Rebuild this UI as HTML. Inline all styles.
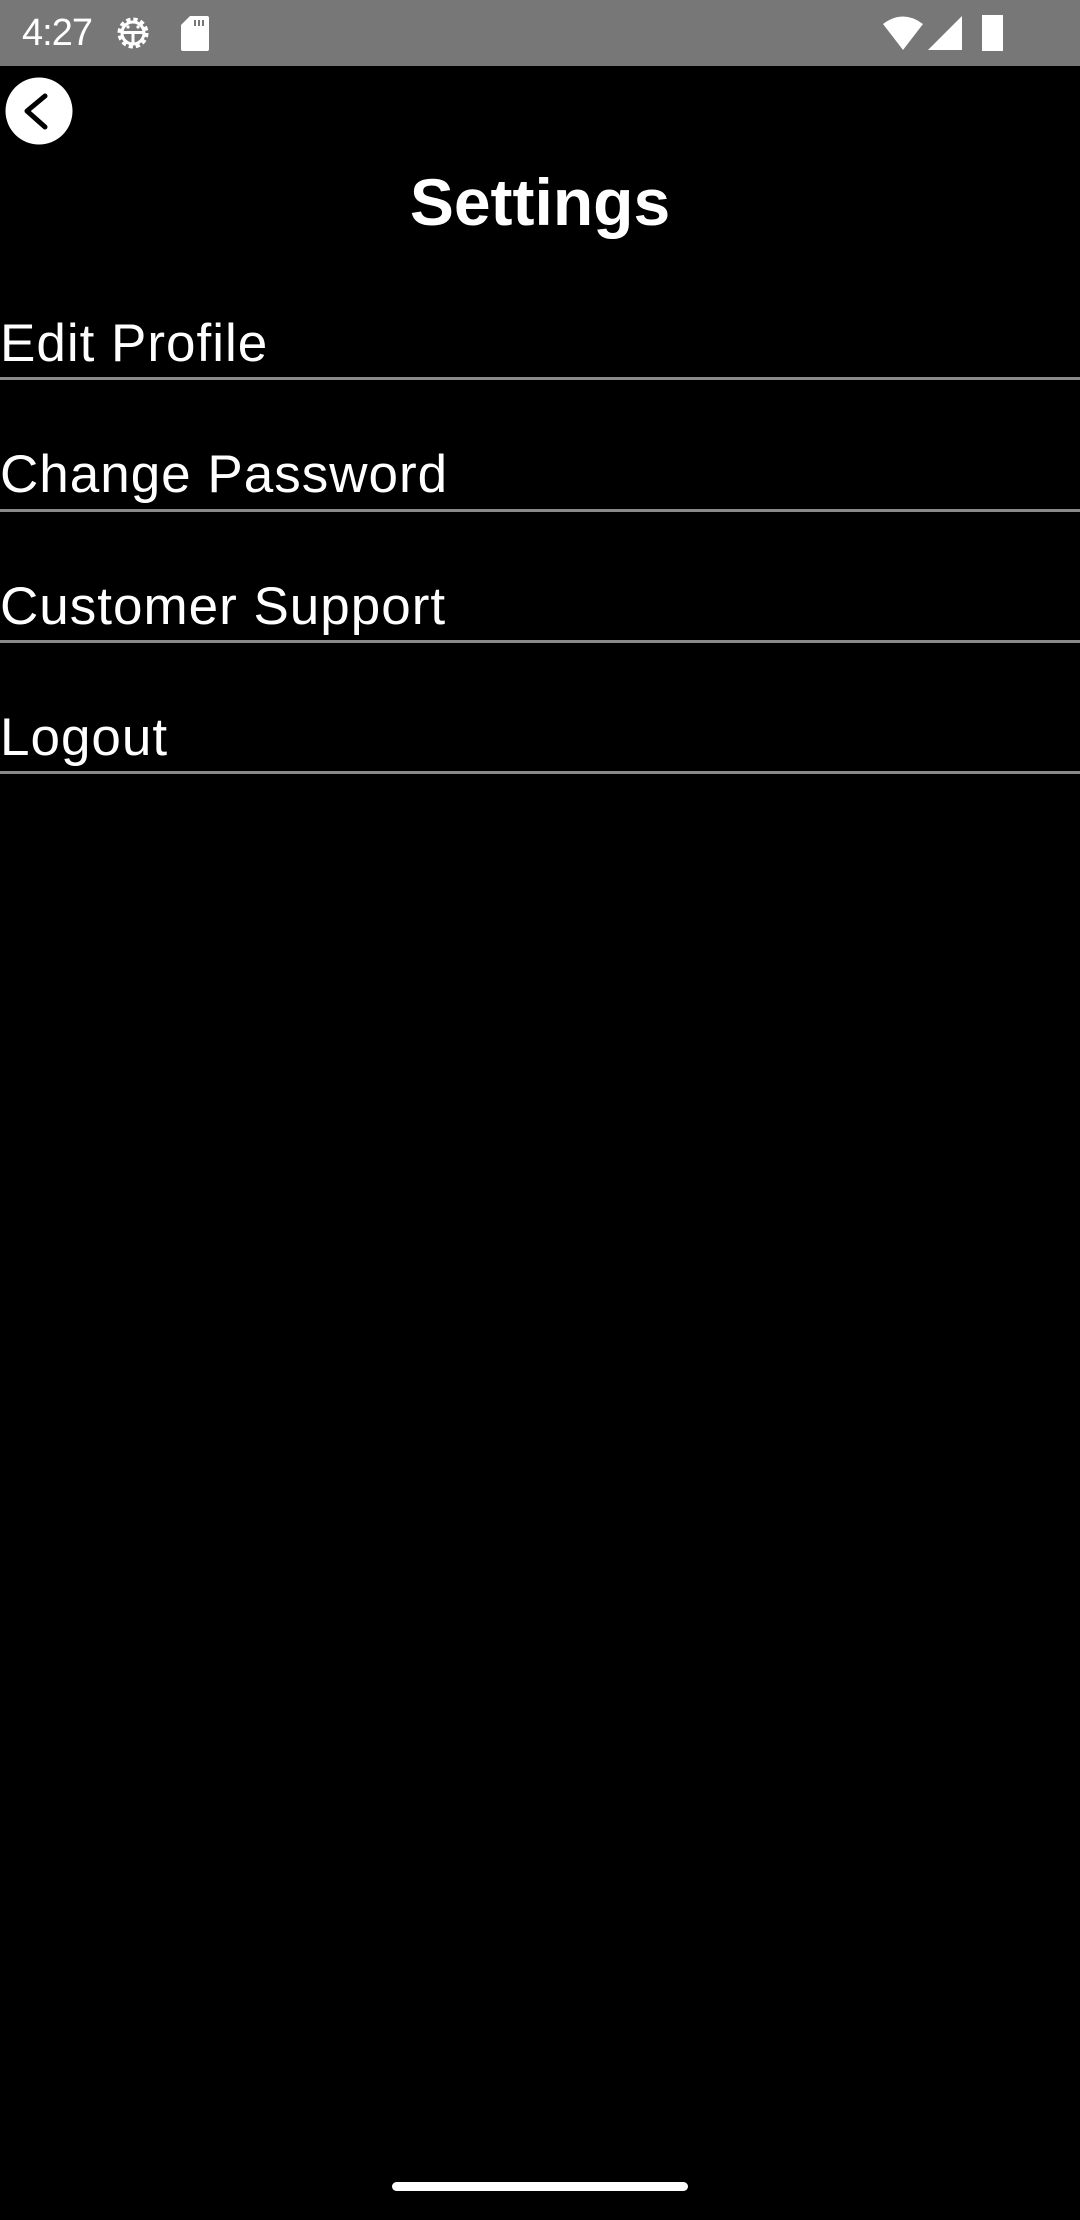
<!DOCTYPE html>
<html><head><meta charset="utf-8"><style>
html,body{margin:0;padding:0;background:#000;width:1080px;height:2220px;overflow:hidden;font-family:"Liberation Sans",sans-serif;color:#fff}
.sb{position:absolute;left:0;top:0;width:1080px;height:66px;background:#777}
.time{position:absolute;left:22px;top:13px;font-size:38px;line-height:40px;letter-spacing:-1px}
.title{position:absolute;left:0;width:1080px;text-align:center;top:162px;font-size:66px;font-weight:bold;line-height:80px}
.item{position:absolute;left:0;font-size:53px;line-height:60px;letter-spacing:1px}
.div{position:absolute;left:0;width:1080px;height:3px;background:#8a8a8a}
.home{position:absolute;left:392px;top:2182px;width:296px;height:9px;border-radius:5px;background:#fff}
</style></head><body>
<div class="sb">
<div class="time">4:27</div>
<svg style="position:absolute;left:113px;top:14px" width="40" height="38" viewBox="0 0 40 38">
<circle cx="20" cy="19" r="13" fill="none" stroke="#fff" stroke-width="5" stroke-dasharray="4 2.8"/>
<circle cx="20" cy="19" r="11" fill="none" stroke="#fff" stroke-width="3"/>
<rect x="9" y="17" width="22" height="3" fill="#fff"/><rect x="18.5" y="17" width="3" height="12" fill="#fff"/>
<circle cx="15" cy="13" r="1.6" fill="#fff"/><circle cx="25" cy="13" r="1.6" fill="#fff"/>
</svg>
<svg style="position:absolute;left:181px;top:16px" width="28" height="35" viewBox="0 0 28 35"><path d="M9 0H26a2 2 0 0 1 2 2V33a2 2 0 0 1-2 2H2a2 2 0 0 1-2-2V9Z" fill="#fff"/><rect x="13" y="4" width="2" height="6" fill="#777"/><rect x="17" y="4" width="2" height="6" fill="#777"/><rect x="21" y="4" width="2" height="6" fill="#777"/></svg>
<svg style="position:absolute;left:883px;top:15px" width="122" height="37" viewBox="0 0 122 37">
<path d="M0 9Q20 -6 40 9L20 35Z" fill="#fff"/>
<path d="M45 35L79 1V35Z" fill="#fff"/>
<rect x="99" y="0" width="21" height="36" fill="#fff"/>
</svg>
</div>
<svg style="position:absolute;left:5px;top:77px" width="68" height="68" viewBox="0 0 68 68"><circle cx="34" cy="34" r="33.5" fill="#fff"/><path d="M40 19L22 34L40 50" fill="none" stroke="#000" stroke-width="5" stroke-linecap="round" stroke-linejoin="round"/></svg>
<div class="title">Settings</div>
<div class="item" style="top:314px">Edit Profile</div><div class="div" style="top:377px"></div>
<div class="item" style="top:445px">Change Password</div><div class="div" style="top:509px"></div>
<div class="item" style="top:577px">Customer Support</div><div class="div" style="top:640px"></div>
<div class="item" style="top:708px">Logout</div><div class="div" style="top:771px"></div>
<div class="home"></div>
</body></html>
